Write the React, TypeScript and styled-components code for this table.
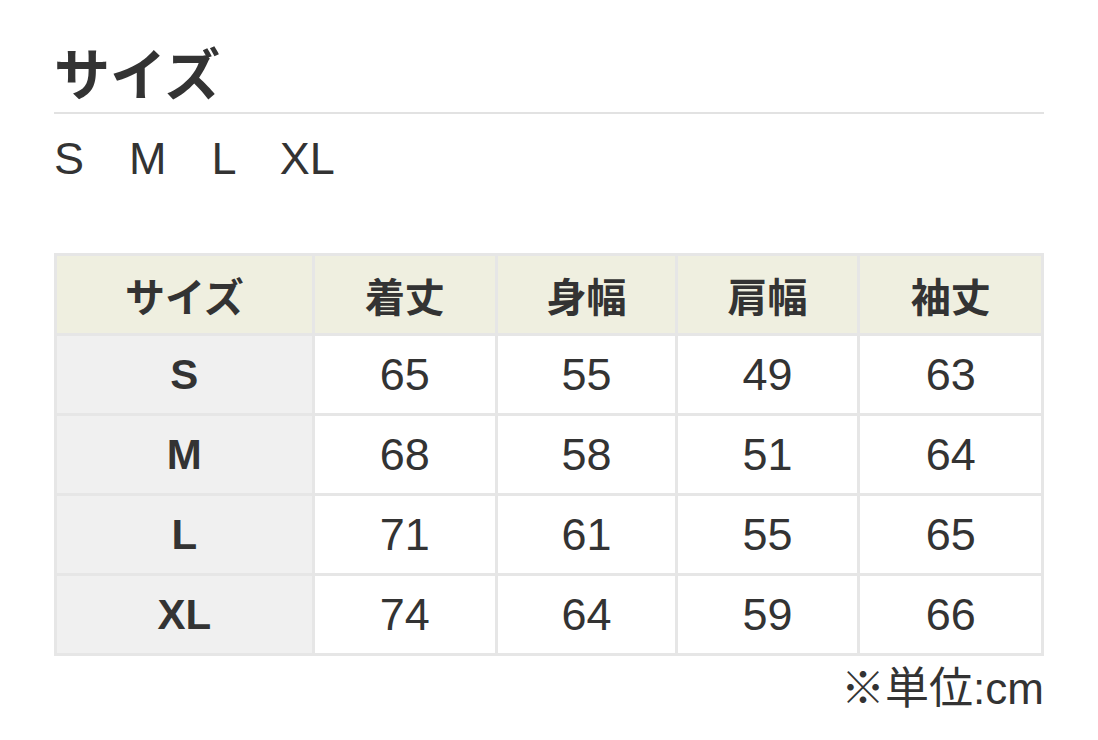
import React from "react";
import styled, { createGlobalStyle } from "styled-components";

const Global = createGlobalStyle`
  html, body { margin: 0; padding: 0; background: #ffffff; }
  body { font-family: "Liberation Sans", "Noto Sans CJK JP", sans-serif; color: #333333; }
`;

const Page = styled.div`
  width: 990px;
  padding: 36px 0 0 54px;
`;

const Title = styled.h2`
  margin: 0;
  font-family: "Noto Sans CJK JP", sans-serif;
  font-size: 56px;
  font-weight: 700;
  line-height: 70px;
  padding-bottom: 6px;
  border-bottom: 2px solid #e2e2e2;
  color: #333333;
`;

const SizeList = styled.p`
  margin: 18px 0 0;
  font-size: 45px;
  line-height: 54px;
  font-weight: 400;
  color: #333333;
`;

const Table = styled.table`
  margin-top: 67px;
  width: 990px;
  border-collapse: collapse;
  table-layout: fixed;
  border: 3px solid #e6e6e6;
`;

const Col = styled.col<{ $w: string }>`
  width: ${(p) => p.$w};
`;

const HeadCell = styled.th`
  height: 77px;
  padding: 0;
  background: #efefe0;
  border: 3px solid #e6e6e6;
  font-family: "Noto Sans CJK JP", sans-serif;
  font-size: 40px;
  font-weight: 700;
  color: #333333;
  text-align: center;
  vertical-align: middle;
`;

const RowHead = styled.th`
  height: 77px;
  padding: 0;
  background: #f0f0f0;
  border: 3px solid #e6e6e6;
  font-size: 42px;
  font-weight: 700;
  color: #333333;
  text-align: center;
  vertical-align: middle;
`;

const Cell = styled.td`
  height: 77px;
  padding: 0;
  background: #ffffff;
  border: 3px solid #e6e6e6;
  font-size: 45px;
  font-weight: 400;
  color: #333333;
  text-align: center;
  vertical-align: middle;
`;

const Note = styled.p`
  margin: 8px 0 0;
  text-align: right;
  font-size: 44px;
  line-height: 50px;
  color: #333333;
`;

const headers = ["サイズ", "着丈", "身幅", "肩幅", "袖丈"];
const widths = ["26.1%", "18.6%", "18.2%", "18.5%", "18.6%"];

const rows: [string, number[]][] = [
  ["S", [65, 55, 49, 63]],
  ["M", [68, 58, 51, 64]],
  ["L", [71, 61, 55, 65]],
  ["XL", [74, 64, 59, 66]],
];

export default function App() {
  return (
    <>
      <Global />
      <Page>
        <Title>サイズ</Title>
        <SizeList>S　M　L　XL</SizeList>
        <Table>
          <colgroup>
            {widths.map((w, i) => (
              <Col key={i} $w={w} />
            ))}
          </colgroup>
          <thead>
            <tr>
              {headers.map((h) => (
                <HeadCell key={h}>{h}</HeadCell>
              ))}
            </tr>
          </thead>
          <tbody>
            {rows.map(([size, vals]) => (
              <tr key={size}>
                <RowHead>{size}</RowHead>
                {vals.map((v, i) => (
                  <Cell key={i}>{v}</Cell>
                ))}
              </tr>
            ))}
          </tbody>
        </Table>
        <Note>※単位:cm</Note>
      </Page>
    </>
  );
}
